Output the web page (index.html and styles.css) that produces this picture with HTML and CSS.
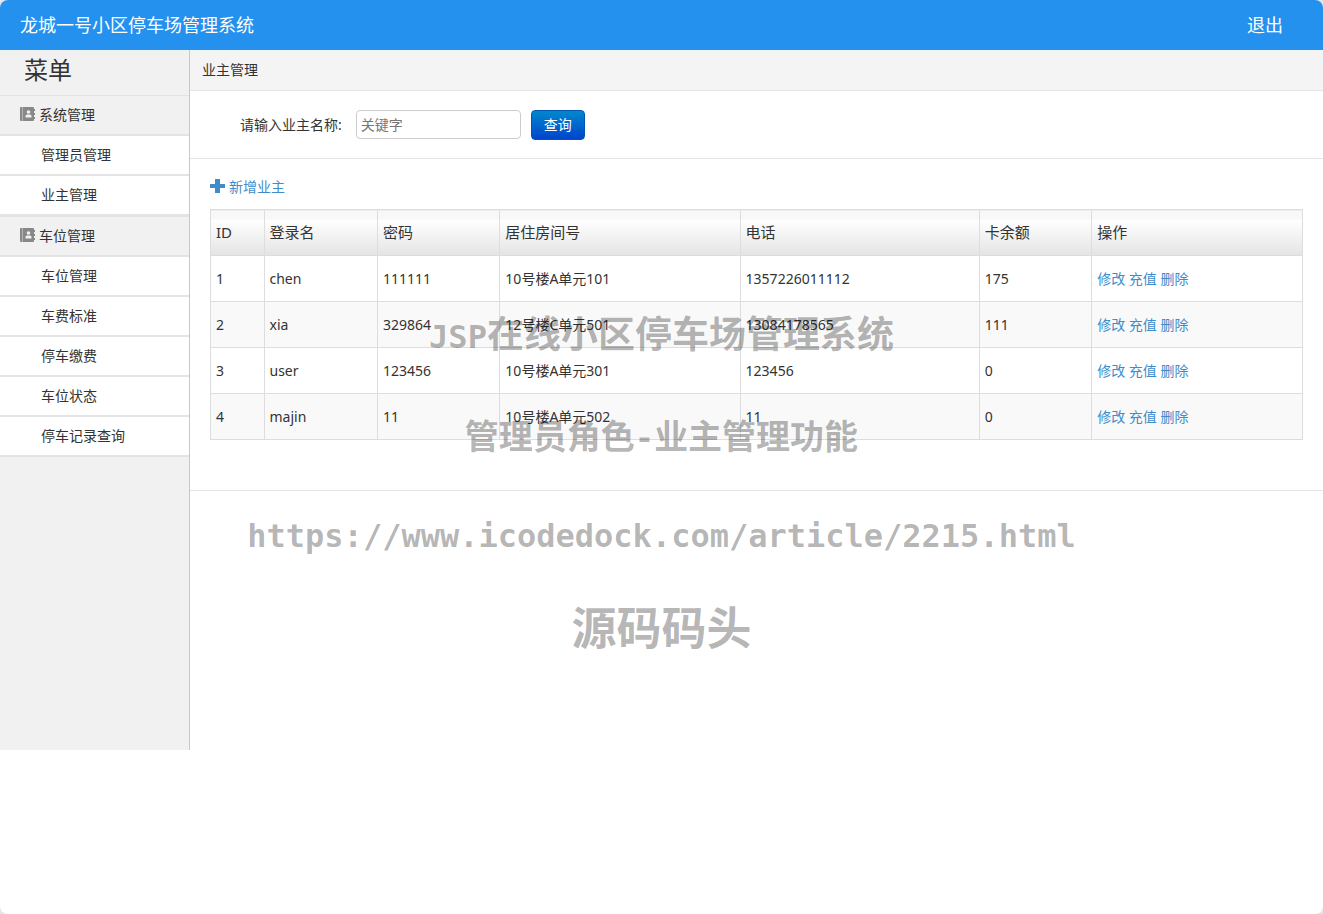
FILE: index.html
```html
<!DOCTYPE html>
<html lang="zh-CN">
<head>
<meta charset="utf-8">
<title>龙城一号小区停车场管理系统</title>
<link rel="stylesheet" href="styles.css">
</head>
<body>
<svg class="sprite" aria-hidden="true">
  <symbol id="book" viewBox="0 0 15 14">
    <path fill="#888" d="M0 1q0-1 1-1h1v14H1q-1 0-1-1z"/>
    <path fill="#b4b4b4" d="M2 0h1v14H2z"/>
    <path fill="#888" d="M3 0h10q1 0 1 1v1h1v2h-1v2h1v2h-1v2h1v2h-1v1q0 1-1 1H3z"/>
    <circle cx="8.500" cy="5" r="1.800" fill="#f1f1f1"/>
    <path fill="#f1f1f1" d="M5.500 10.500V9q0-1.500 1.500-1.500h3q1.500 0 1.500 1.500v1.500z"/>
  </symbol>
</svg>
<div class="window">
  <header class="topbar">
    <span>龙城一号小区停车场管理系统</span>
    <a href="#">退出</a>
  </header>
  <div class="layout">
    <nav class="sidebar">
      <h1 class="menu-title">菜单</h1>
      <section class="group">
        <h2 class="group-title"><svg class="book"><use href="#book"/></svg>系统管理</h2>
        <a class="item" href="#">管理员管理</a>
        <a class="item" href="#">业主管理</a>
      </section>
      <section class="group">
        <h2 class="group-title"><svg class="book"><use href="#book"/></svg>车位管理</h2>
        <a class="item" href="#">车位管理</a>
        <a class="item" href="#">车费标准</a>
        <a class="item" href="#">停车缴费</a>
        <a class="item" href="#">车位状态</a>
        <a class="item" href="#">停车记录查询</a>
      </section>
    </nav>
    <main class="content">
      <div class="crumb">业主管理</div>
      <form class="search">
        <label for="keyword">请输入业主名称:</label>
        <input id="keyword" type="text" placeholder="关键字">
        <button type="button">查询</button>
      </form>
      <div class="listing">
        <a class="add" href="#"><svg class="plus" viewBox="0 0 15 14"><path fill="#428bca" d="M5 0h5v5h5v4h-5v5H5V9H0V5h5z"/></svg>新增业主</a>
        <table class="owners">
          <colgroup>
            <col class="c-id"><col class="c-login"><col class="c-pass"><col class="c-room"><col class="c-phone"><col class="c-card"><col>
          </colgroup>
          <thead>
            <tr><th>ID</th><th>登录名</th><th>密码</th><th>居住房间号</th><th>电话</th><th>卡余额</th><th>操作</th></tr>
          </thead>
          <tbody>
            <tr><td>1</td><td>chen</td><td>111111</td><td>10号楼A单元101</td><td>1357226011112</td><td>175</td><td><a href="#">修改</a> <a href="#">充值</a> <a href="#">删除</a></td></tr>
            <tr><td>2</td><td>xia</td><td>329864</td><td>12号楼C单元501</td><td>13084178565</td><td>111</td><td><a href="#">修改</a> <a href="#">充值</a> <a href="#">删除</a></td></tr>
            <tr><td>3</td><td>user</td><td>123456</td><td>10号楼A单元301</td><td>123456</td><td>0</td><td><a href="#">修改</a> <a href="#">充值</a> <a href="#">删除</a></td></tr>
            <tr><td>4</td><td>majin</td><td>11</td><td>10号楼A单元502</td><td>11</td><td>0</td><td><a href="#">修改</a> <a href="#">充值</a> <a href="#">删除</a></td></tr>
          </tbody>
        </table>
      </div>
    </main>
  </div>
  <div class="watermark">
    <p class="mark-title"><span class="mark-latin">JSP</span>在线小区停车场管理系统</p>
    <p class="mark-sub">管理员角色<span class="mark-latin">-</span>业主管理功能</p>
    <p class="mark-url">https://www.icodedock.com/article/2215.html</p>
    <p class="mark-brand">源码码头</p>
  </div>
</div>
</body>
</html>
```
FILE: styles.css
```css
* { box-sizing: border-box; }
body {
  margin: 0;
  background: #e4e6e8;
  color: #333;
  font: 14px/20px "Noto Sans", "Noto Sans CJK SC", sans-serif;
}
p { margin: 0; }
a { color: #428bca; text-decoration: none; }
.sprite { display: none; }
.window {
  position: relative;
  min-height: 100vh;
  overflow: hidden;
  background: #fff;
  border-radius: 8px;
}
.topbar {
  display: flex;
  justify-content: space-between;
  align-items: center;
  height: 50px;
  padding: 0 40px 0 20px;
  background: #2491ef;
  color: #fff;
  font-size: 18px;
}
.topbar a { color: #fff; }
.layout { display: flex; min-height: 700px; }
.sidebar {
  flex: 0 0 190px;
  background: #f1f1f1;
  border-right: 1px solid #c8c8c8;
}
.menu-title {
  margin: 0;
  padding: 0 24px 5px;
  font-size: 24px;
  font-weight: 400;
  line-height: 40px;
}
.group { border-top: 1px solid #e4e4e4; }
.group-title, .item {
  display: flex;
  align-items: center;
  height: 40px;
  border-bottom: 2px solid #e4e4e4;
}
.group-title {
  gap: 4px;
  margin: 0;
  padding-left: 20px;
  font-size: 14px;
  font-weight: 400;
}
.book, .plus { width: 15px; height: 14px; margin-bottom: 2px; }
.item { padding-left: 41px; background: #fff; color: #333; }
.content { flex: 1; min-width: 0; }
.crumb {
  padding: 10px 12px;
  background: #f4f4f4;
  border-bottom: 1px solid #e4e4e4;
}
.search {
  display: flex;
  align-items: center;
  height: 68px;
  padding-left: 50px;
  border-bottom: 1px solid #e4e4e4;
}
.search input {
  width: 165px;
  height: 29px;
  margin: 0 10px 0 14px;
  padding: 0 4px;
  border: 1px solid #ccc;
  border-radius: 4px;
  font: inherit;
}
.search input::placeholder { color: #777; }
.search button {
  width: 54px;
  height: 30px;
  padding: 0;
  border: 1px solid #0055b3;
  border-radius: 4px;
  background: linear-gradient(#08c, #04c);
  color: #fff;
  font: inherit;
}
.listing { padding: 18px 20px 50px; border-bottom: 1px solid #e4e4e4; }
.add { display: flex; align-items: center; gap: 4px; margin-bottom: 12px; }
.owners {
  width: 100%;
  table-layout: fixed;
  border-collapse: collapse;
}
.owners th, .owners td {
  height: 46px;
  padding: 0 5px;
  border: 1px solid #ddd;
  text-align: left;
}
.owners th {
  padding-bottom: 2px;
  background: linear-gradient(#f8f8f8 9px, #fff 9px, #e4e4e4);
  font-size: 15px;
  font-weight: 400;
}
.owners tbody tr:nth-child(even) { background: #f9f9f9; }
.c-id { width: 4.9%; }
.c-login { width: 10.4%; }
.c-pass { width: 11.2%; }
.c-room { width: 22%; }
.c-phone { width: 21.9%; }
.c-card { width: 10.3%; }
.watermark {
  position: absolute;
  top: 306px;
  left: 0;
  right: 0;
  color: rgba(0, 0, 0, 0.3);
  font-family: "Noto Sans CJK SC", sans-serif;
  font-weight: 700;
  text-align: center;
  white-space: nowrap;
  pointer-events: none;
}
.mark-title { font-size: 37px; line-height: 52px; }
.mark-sub { margin-top: 46px; font-size: 34px; line-height: 52px; }
.mark-latin { font-family: "DejaVu Sans Mono", monospace; font-size: 32px; }
.mark-url {
  margin-top: 46px;
  font-family: "DejaVu Sans Mono", monospace;
  font-size: 32px;
  line-height: 52px;
}
.mark-brand { margin-top: 32px; font-size: 45px; line-height: 64px; }
```
